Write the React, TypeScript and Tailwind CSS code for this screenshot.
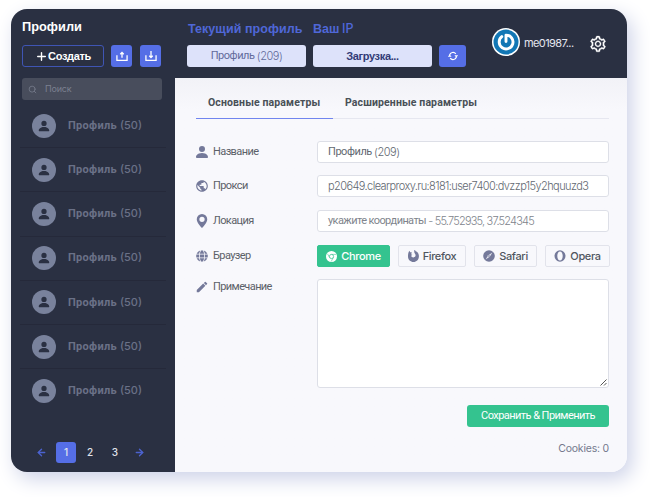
import type { ReactNode } from "react";
import { BsPersonFill, BsGeoAltFill } from "react-icons/bs";
import { MdPublic, MdEdit } from "react-icons/md";
import { FaGlobe } from "react-icons/fa";
import { AiOutlineSetting } from "react-icons/ai";
import { ArrowLeft, ArrowRight, Plus, Search } from "lucide-react";

const arial = "font-['Liberation_Sans',sans-serif]";
const inter = "font-[Inter,sans-serif]";
const roboto = "font-[Roboto,sans-serif]";

function TransferIcon({ up }: { up: boolean }) {
  return (
    <svg width="12" height="12" viewBox="0 0 13 13" fill="none" stroke="#fff" strokeWidth="1.4">
      <path d="M1 5.8v5.400h11V5.8" />
      {up ? <path d="M6.5 8.4V3M4.600 4.600l1.900-1.900 1.900 1.900" /> : <path d="M6.5 1v6.800M4.600 6.200l1.900 1.900 1.900-1.900" />}
    </svg>
  );
}

function RefreshIcon() {
  return (
    <svg width="12" height="12" viewBox="0 0 12 12" fill="none">
      <path d="M2.6 5.2A3.5 3.5 0 0 1 8.8 3.8M9.4 6.8A3.5 3.5 0 0 1 3.2 8.2" stroke="#fff" strokeWidth="1.2" />
      <path d="M.8 6.800h3.800L2.700 4.500zM11.200 5.200H7.400l1.900 2.300z" fill="#fff" />
    </svg>
  );
}

function PowerLogo() {
  return (
    <svg width="28" height="28" viewBox="0 0 28 28" fill="none" className="shrink-0">
      <circle cx="14" cy="14" r="14" fill="#fff" />
      <circle cx="14" cy="14" r="12.500" fill="#1277b5" />
      <path d="M9.800 8.600A6.900 6.900 0 1 0 14 7.100V13.500" stroke="#fff" strokeWidth="2.900" strokeLinecap="round" strokeLinejoin="round" />
    </svg>
  );
}

function ChromeIcon() {
  return (
    <svg width="11" height="11" viewBox="0 0 12 12" fill="none">
      <circle cx="6" cy="6" r="6" fill="#fff" />
      <circle cx="6" cy="6" r="2.300" stroke="#34c38f" strokeWidth=".8" />
      <path d="M6 3.700h5M4 7.150L1.600 3M8 7.150L5.700 11.400" stroke="#34c38f" strokeWidth=".6" />
    </svg>
  );
}

function FirefoxIcon() {
  return (
    <svg width="11" height="12" viewBox="0 0 11 12" fill="#74799a">
      <path d="M.5 2.500L1.300.8l1 1.500 1.700.1L3 4.200l1.300.6-1.100.9c.2 1.200 1.200 1.800 2.300 1.700 1.700-.1 2.500-1.600 1.900-3C7 3.300 5.900 2.900 6.300 0c1 .3 1.500 1.100 1.800 2l.4-.7C10 2.600 11 4.400 10.900 6.500 10.800 9.700 8.400 12 5.500 12 2.500 12 0 9.700 0 6.500 0 5 .1 3.600.5 2.500z" />
    </svg>
  );
}

function SafariIcon() {
  return (
    <svg width="12" height="12" viewBox="0 0 12 12">
      <circle cx="6" cy="6" r="5.800" fill="#74799a" />
      <path d="M9.400 2.600L6.800 6.700 2.600 9.400l2.600-4.200z" fill="#e4e5ee" />
      <circle cx="6" cy="6" r=".8" fill="#74799a" />
    </svg>
  );
}

function OperaIcon() {
  return (
    <svg width="12" height="12" viewBox="0 0 12 12">
      <path fillRule="evenodd" d="M6 .2a5.500 5.800 0 1 0 0 11.600A5.500 5.800 0 1 0 6 .2zM6 1.500c1.600 0 2.700 1.900 2.700 4.500S7.600 10.500 6 10.500 3.300 8.600 3.300 6 4.400 1.500 6 1.500z" fill="#74799a" />
    </svg>
  );
}

function ProfileRow() {
  return (
    <div className="flex h-[44.200px] items-center border-b border-[#25293a] pl-3 last:border-transparent">
      <span className="flex size-6 items-center justify-center rounded-full bg-[#79829c] text-[#2a3042]">
        <BsPersonFill size={14} />
      </span>
      <span className={`ml-[12px] whitespace-nowrap text-[11px] text-[#6a7187] ${inter}`}>
        <b className={`${roboto} tracking-[0.300px]`}>Профиль</b>
        <span className="ml-[3px] font-medium">(50)</span>
      </span>
    </div>
  );
}

function Field({ icon, label, children }: { icon: ReactNode; label: string; children: ReactNode }) {
  return (
    <div className="flex items-start">
      <div className="flex h-[22px] w-[121px] shrink-0 items-center gap-[5px] text-[#74799a]">
        <span className="flex w-3 justify-center">{icon}</span>
        <span className={`pt-px text-[11px] tracking-[-0.600px] text-[#5b6068] ${roboto}`}>{label}</span>
      </div>
      {children}
    </div>
  );
}

const inputBox = "flex h-[22px] w-[292px] items-center whitespace-nowrap rounded-[3px] border border-[#dddfe7] bg-white pl-[10px] text-[11px]";
const browserBox = "flex h-[22px] items-center justify-center gap-[4px] rounded-[2px] border text-[11px] font-medium tracking-[-0.350px]";

export default function App() {
  return (
    <div className="h-[497px] w-[650px] overflow-hidden bg-white pl-[11px] pt-[9px]">
      <div className="flex h-[463px] w-[616px] overflow-hidden rounded-[16px] bg-[#f8f8fc] shadow-[5px_7px_20px_#cdd2e8]">
        <aside className="flex w-[164px] shrink-0 flex-col bg-[#2a3042] pl-[11px]">
          <h1 className={`mt-[9px] h-[18px] text-[12.800px] font-bold leading-[18px] text-white ${arial}`}>Профили</h1>
          <div className="mt-[9px] flex h-[22px]">
            <button className={`flex w-[82px] items-center justify-center rounded-[3px] border border-[#3f55b4] text-[11px] font-bold tracking-[-0.350px] text-white ${arial}`}>
              <Plus size={13} strokeWidth={2.600} />Создать
            </button>
            <button className="ml-[7px] flex w-[21px] items-center justify-center rounded-[3px] bg-[#556ee6]"><TransferIcon up /></button>
            <button className="ml-2 flex w-[21px] items-center justify-center rounded-[3px] bg-[#556ee6]"><TransferIcon up={false} /></button>
          </div>
          <div className={`mt-[11px] flex h-[22px] w-[140px] items-center gap-2 rounded-[3px] bg-[#484d5c] pl-[6px] text-[9px] tracking-[-0.200px] text-[#7b8090] ${inter}`}>
            <Search size={9} />Поиск
          </div>
          <div className="-ml-[2px] mt-[4px] w-[146px]">
            {Array.from({ length: 7 }, (_, i) => <ProfileRow key={i} />)}
          </div>
          <nav className={`mt-[29px] flex h-[21px] items-center text-[10px] font-medium text-[#e2e4ed] ${inter}`}>
            <ArrowLeft size={11} strokeWidth={3} className="ml-[14px] text-[#4b62cf]" />
            <span className="ml-[9px] flex h-[21px] w-5 items-center justify-center rounded-[3px] bg-[#556ee6]">1</span>
            <span className="w-7 text-center">2</span>
            <span className="w-[22px] text-center">3</span>
            <ArrowRight size={11} strokeWidth={3} className="ml-[8px] text-[#4b62cf]" />
          </nav>
        </aside>
        <main className="flex min-w-0 flex-1 flex-col">
          <header className="flex h-[69px] shrink-0 bg-[#2a3042] pl-[12px]">
            <div className="w-[279px]">
              <div className={`mt-[10px] flex h-[20px] items-center whitespace-nowrap pl-[1px] text-[12.500px] font-bold tracking-[0.050px] text-[#4f67d8] ${arial}`}>
                <span className="w-[125px]">Текущий профиль</span>
                <span>Ваш <span className={`-ml-px font-medium ${inter}`}>IP</span></span>
              </div>
              <div className={`mt-[6px] flex h-[22px] text-[11px] ${arial}`}>
                <div className={`flex w-[119px] items-center justify-center rounded-[3px] bg-[#dde2fa] tracking-[-0.450px] text-[#626b9a] ${roboto}`}>Профиль&nbsp;<span className={inter + " font-light"}>(209)</span></div>
                <div className="ml-[7px] flex w-[119px] items-center justify-center rounded-[3px] bg-[#dde2fa] font-bold tracking-[-0.350px] text-[#323b76]">Загрузка...</div>
                <button className="ml-[7px] flex w-[27px] items-center justify-center rounded-[3px] bg-[#556ee6]"><RefreshIcon /></button>
              </div>
            </div>
            <div className={`ml-[26px] flex h-[65px] items-center text-[11px] text-[#e4e6ef] ${inter}`}>
              <PowerLogo />
              <span className="ml-[4px] mt-[4px] w-[65px] tracking-[-0.600px]">me01987...</span>
              <AiOutlineSetting size={18} strokeWidth={20} className="mt-[4px] text-white" />
            </div>
          </header>
          <div className="flex flex-1 flex-col bg-gradient-to-b from-[#f2f2f7] via-[#f8f8fc] via-[8%] to-[#f8f8fc] pl-[21px]">
            <div className={`flex h-[41px] w-[413px] border-b border-[#e6e7f0] pt-[17px] text-[10.500px] font-bold tracking-[0.120px] text-[#495057] ${roboto}`}>
              <span className="h-[24px] w-[137px] border-b border-[#7185ef] pl-[12px] leading-[15px]">Основные параметры</span>
              <span className="ml-[12px] leading-[15px]">Расширенные параметры</span>
            </div>
            <div className="mt-[22px] flex flex-col">
              <Field icon={<BsPersonFill size={16} className="shrink-0" />} label="Название">
                <div className={`${inputBox} tracking-[-0.450px] text-[#626871] ${roboto}`}>Профиль&nbsp;<span className={`font-light ${inter}`}>(209)</span></div>
              </Field>
              <div className="mt-[12px]"><Field icon={<MdPublic size={14} className="shrink-0" />} label="Прокси">
                <div className={`${inputBox} font-light text-[#626871] ${inter}`}><span className="tracking-[-0.580px]">p20649.clearproxy.ru:8181:user7400:dvzzp15y2hquuzd3</span></div>
              </Field></div>
              <div className="mt-[13px]"><Field icon={<BsGeoAltFill size={14} className="shrink-0" />} label="Локация">
                <div className={`${inputBox} tracking-[-0.600px] text-[#80848c] ${roboto}`}>укажите координаты&nbsp;<span className={`font-light tracking-[-0.800px] ${inter}`}>- 55.752935, 37.524345</span></div>
              </Field></div>
              <div className="mt-[13px]"><Field icon={<FaGlobe size={12} className="shrink-0" />} label="Браузер">
                <div className={`flex text-[#50565f] ${inter}`}>
                  <div className={`${browserBox} w-[73px] border-[#34c38f] bg-[#34c38f] text-white`}><ChromeIcon />Chrome</div>
                  <div className={`${browserBox} ml-[8px] w-[68px] border-[#e2e3eb]`}><FirefoxIcon />Firefox</div>
                  <div className={`${browserBox} ml-[8px] w-[63px] border-[#e2e3eb]`}><SafariIcon />Safari</div>
                  <div className={`${browserBox} ml-[8px] w-[65px] border-[#e2e3eb]`}><OperaIcon />Opera</div>
                </div>
              </Field></div>
              <div className="mt-[9px]"><Field icon={<MdEdit size={14} className="shrink-0" />} label="Примечание">
                <div className="mt-[3px] flex h-[109px] w-[292px] items-end justify-end rounded-[3px] border border-[#dddfe7] bg-white p-px">
                  <svg width="7" height="7" viewBox="0 0 7 7" stroke="#555" strokeWidth="1"><path d="M.5 6.500l6-6M4 6.500l2.500-2.500" /></svg>
                </div>
              </Field></div>
            </div>
            <div className="flex w-[413px] flex-col items-end">
              <button className={`mt-[17px] flex h-[22px] w-[142px] items-center justify-center rounded-[3px] bg-[#34c38f] pt-px text-[11px] tracking-[-0.550px] text-white ${roboto}`}>Сохранить &amp; Применить</button>
              <span className={`mt-[15px] h-[14px] text-[10.500px] leading-[14px] tracking-[-0.200px] text-[#74788d] ${inter}`}>Cookies: 0</span>
            </div>
          </div>
        </main>
      </div>
    </div>
  );
}
